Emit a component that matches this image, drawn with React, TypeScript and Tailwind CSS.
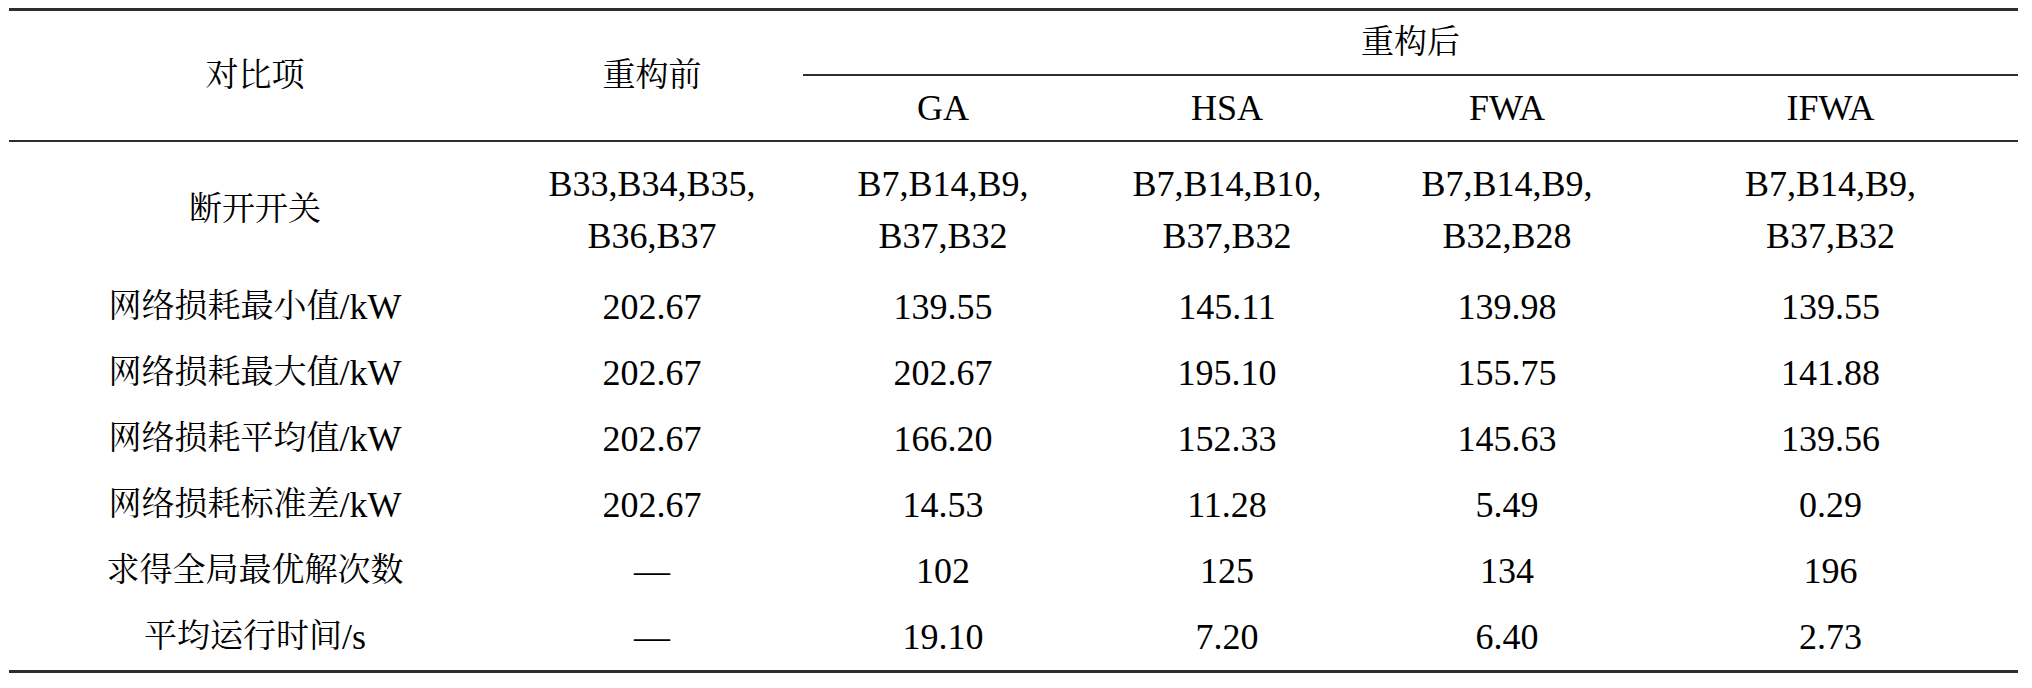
import React from "react";

const font = {
  fontFamily:
    '"Liberation Serif", "Noto Serif CJK SC", "Noto Sans CJK SC", serif',
};

const cols = "grid grid-cols-[492px_302px_280px_288px_272px_375px]";

type Label = [string, string];

const rows: { label: Label; vals: string[] }[] = [
  { label: ["网络损耗最小值", "/kW"], vals: ["202.67", "139.55", "145.11", "139.98", "139.55"] },
  { label: ["网络损耗最大值", "/kW"], vals: ["202.67", "202.67", "195.10", "155.75", "141.88"] },
  { label: ["网络损耗平均值", "/kW"], vals: ["202.67", "166.20", "152.33", "145.63", "139.56"] },
  { label: ["网络损耗标准差", "/kW"], vals: ["202.67", "14.53", "11.28", "5.49", "0.29"] },
  { label: ["求得全局最优解次数", ""], vals: ["—", "102", "125", "134", "196"] },
  { label: ["平均运行时间", "/s"], vals: ["—", "19.10", "7.20", "6.40", "2.73"] },
];

const switches: [string, string][] = [
  ["B33,B34,B35,", "B36,B37"],
  ["B7,B14,B9,", "B37,B32"],
  ["B7,B14,B10,", "B37,B32"],
  ["B7,B14,B9,", "B32,B28"],
  ["B7,B14,B9,", "B37,B32"],
];

function Cjk({ children }: { children: React.ReactNode }) {
  return <span className="text-[33px]">{children}</span>;
}

export default function App() {
  return (
    <div
      className="w-[2032px] h-[688px] bg-white pt-[8px] pl-[9px] text-black text-[36px]"
      style={font}
    >
      <div className="w-[2009px]">
        <div className="h-[3px] bg-[#2e2e2e]" />
        {/* header */}
        <div className={cols + " h-[129px] grid-rows-[65px_64px]"}>
          <div className="row-span-2 flex items-center justify-center">
            <Cjk>对比项</Cjk>
          </div>
          <div className="row-span-2 flex items-center justify-center">
            <Cjk>重构前</Cjk>
          </div>
          <div className="col-span-4 flex flex-col">
            <div className="h-[63px] flex items-center justify-center">
              <Cjk>重构后</Cjk>
            </div>
            <div className="h-[2px] bg-[#2e2e2e]" />
          </div>
          <div className="flex items-center justify-center">GA</div>
          <div className="flex items-center justify-center">HSA</div>
          <div className="flex items-center justify-center">FWA</div>
          <div className="flex items-center justify-center">IFWA</div>
        </div>
        <div className="h-[2px] bg-[#2e2e2e]" />
        {/* body */}
        <div className={cols + " h-[132px] pt-[4px]"}>
          <div className="flex items-center justify-center">
            <Cjk>断开开关</Cjk>
          </div>
          {switches.map((s, i) => (
            <div key={i} className="flex flex-col items-center justify-center leading-[52px]">
              <div>{s[0]}</div>
              <div>{s[1]}</div>
            </div>
          ))}
        </div>
        {rows.map((r, i) => (
          <div key={i} className={cols + " h-[66px]"}>
            <div className="flex items-center justify-center">
              <Cjk>{r.label[0]}</Cjk>
              {r.label[1] && <span>{r.label[1]}</span>}
            </div>
            {r.vals.map((c, j) => (
              <div key={j} className="flex items-center justify-center">
                {c}
              </div>
            ))}
          </div>
        ))}
        <div className="h-[3px] bg-[#2e2e2e]" />
      </div>
    </div>
  );
}
